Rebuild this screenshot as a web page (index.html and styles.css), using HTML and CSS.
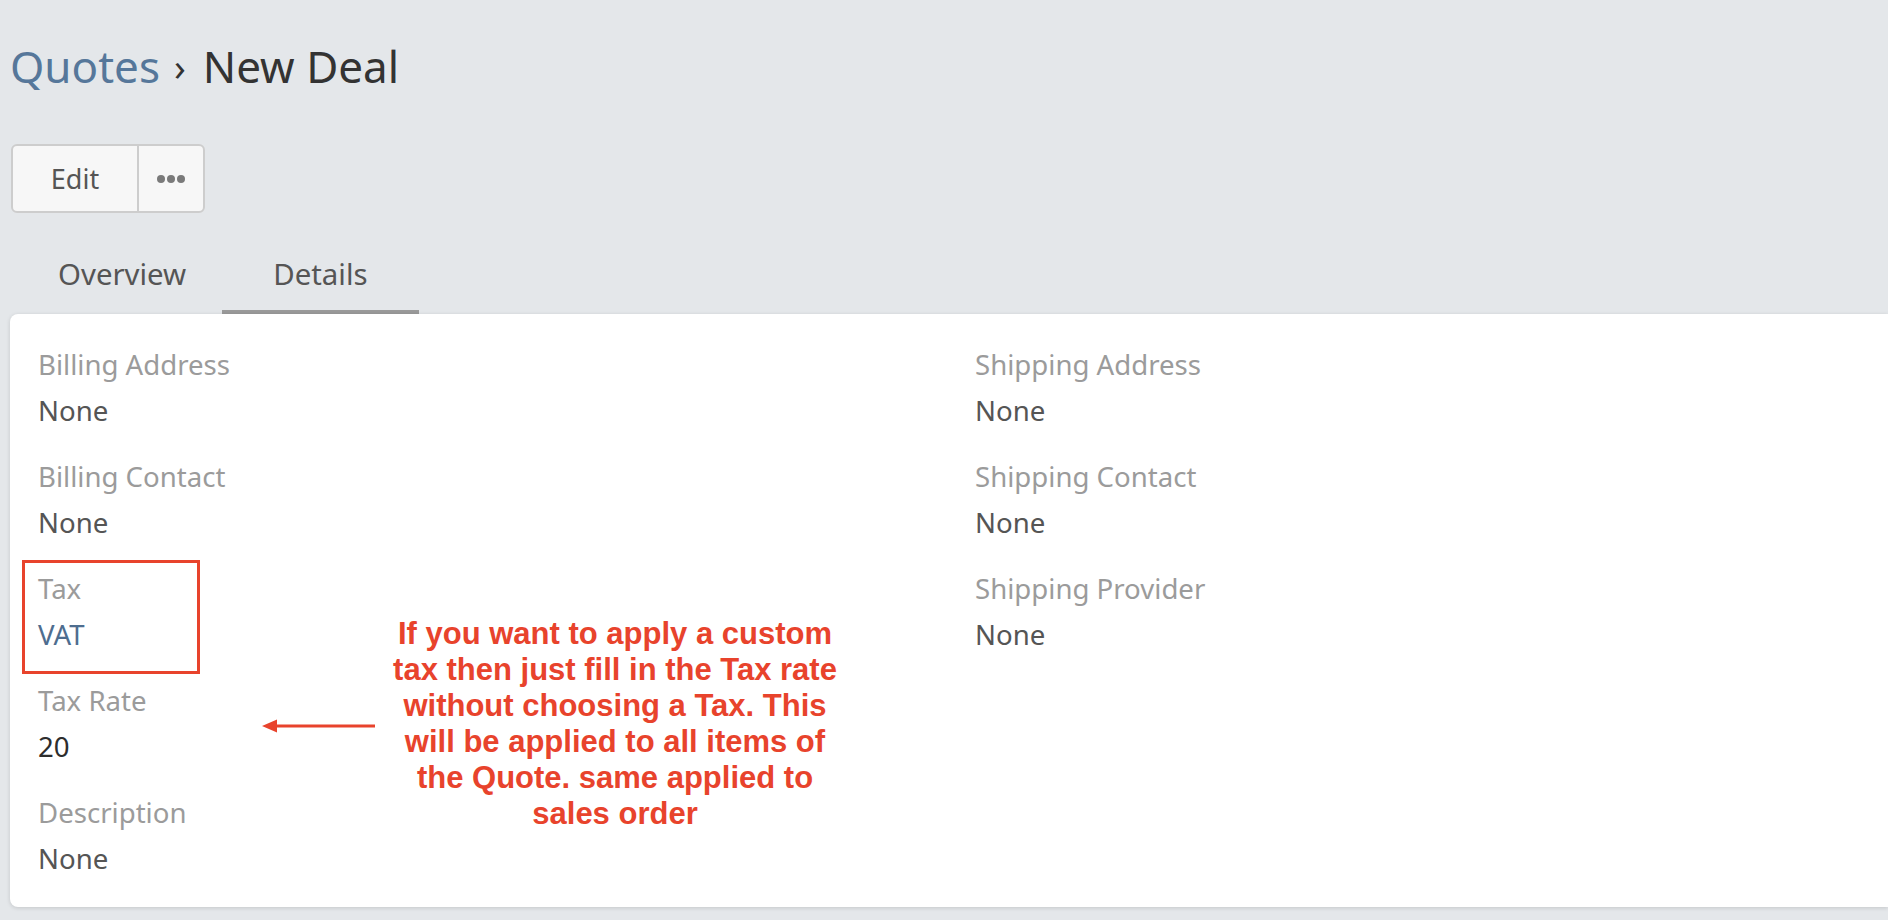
FILE: index.html
```html
<!DOCTYPE html>
<html lang="en">
<head>
<meta charset="utf-8">
<title>Quotes › New Deal</title>
<link rel="stylesheet" href="styles.css">
</head>
<body>
<header class="page-header">
  <h1 class="title"><a class="crumb" href="#">Quotes</a><span class="sep">›</span><span class="current">New Deal</span></h1>
  <div class="btn-group">
    <button class="btn btn-edit">Edit</button>
    <button class="btn btn-more" aria-label="More"><span class="dot"></span><span class="dot"></span><span class="dot"></span></button>
  </div>
  <nav class="tabs">
    <a class="tab tab-first" href="#">Overview</a>
    <a class="tab active" href="#">Details</a>
  </nav>
</header>
<main class="card">
  <div class="grid">
    <div class="col">
      <div class="field"><div class="label">Billing Address</div><div class="value">None</div></div>
      <div class="field"><div class="label">Billing Contact</div><div class="value">None</div></div>
      <div class="field"><div class="label">Tax</div><div class="value link">VAT</div></div>
      <div class="field"><div class="label">Tax Rate</div><div class="value dark">20</div></div>
      <div class="field"><div class="label">Description</div><div class="value">None</div></div>
    </div>
    <div class="col">
      <div class="field"><div class="label">Shipping Address</div><div class="value">None</div></div>
      <div class="field"><div class="label">Shipping Contact</div><div class="value">None</div></div>
      <div class="field"><div class="label">Shipping Provider</div><div class="value">None</div></div>
    </div>
  </div>
  <div class="highlight-box"></div>
  <svg class="arrow" width="114" height="16" viewBox="0 0 114 16" aria-hidden="true">
    <line x1="12" y1="8" x2="113" y2="8" stroke="#e8432c" stroke-width="3"/>
    <polygon points="0,8 15,1.5 15,14.5" fill="#e8432c"/>
  </svg>
  <div class="note">If you want to apply a custom<br>tax then just fill in the Tax rate<br>without choosing a Tax. This<br>will be applied to all items of<br>the Quote. same applied to<br>sales order</div>
</main>
</body>
</html>
```

FILE: styles.css
```css
html, body {
  margin: 0;
  padding: 0;
}
body {
  background: #e4e7ea;
  font-family: "Noto Sans", "Open Sans", sans-serif;
  padding-left: 10px;
  height: 920px;
  overflow: hidden;
  box-sizing: border-box;
}
.page-header {
  display: flex;
  flex-direction: column;
  align-items: flex-start;
}
.title {
  margin: 0;
  padding-top: 36px;
  height: 60px;
  line-height: 60px;
  font-size: 44px;
  font-weight: 400;
  color: #333;
  display: flex;
  align-items: center;
}
.crumb {
  color: #56779a;
  text-decoration: none;
}
.sep {
  font-size: 38px;
  color: #333;
  margin: 0 17px 0 14px;
}
.current {
  color: #333;
}
.btn-group {
  margin-top: 48px;
  margin-left: 1px;
  display: flex;
  height: 69px;
  border: 2px solid #cdcdcd;
  border-radius: 6px;
  background: #f7f7f7;
  box-sizing: border-box;
  overflow: hidden;
}
.btn {
  font-family: inherit;
  background: transparent;
  border: 0;
  padding: 0;
  margin: 0;
  display: flex;
  align-items: center;
  justify-content: center;
}
.btn-edit {
  width: 126px;
  font-size: 27px;
  color: #555;
  border-right: 2px solid #cdcdcd;
}
.btn-more {
  width: 64px;
  gap: 2px;
}
.dot {
  width: 8px;
  height: 8px;
  border-radius: 50%;
  background: #7a7a7a;
}
.tabs {
  margin-top: 41px;
  display: flex;
}
.tab {
  display: block;
  font-size: 29.4px;
  line-height: 40px;
  padding: 0 51px 16px;
  color: #555;
  text-decoration: none;
  border-bottom: 4px solid transparent;
}
.tab-first {
  padding-left: 48px;
  padding-right: 36px;
}
.tab.active {
  border-bottom-color: #9a9a9a;
}
.card {
  position: relative;
  background: #fff;
  border-radius: 8px 0 0 8px;
  box-shadow: 0 1px 4px rgba(0, 0, 0, 0.14);
  padding: 30px 0 29px 28px;
}
.grid {
  display: grid;
  grid-template-columns: 937px 1fr;
}
.col {
  display: flex;
  flex-direction: column;
  gap: 26px;
}
.label {
  font-size: 27.6px;
  line-height: 40px;
  color: #9b9b9b;
  margin-bottom: 6px;
}
.value {
  font-size: 27.6px;
  line-height: 40px;
  color: #555;
}
.value.link {
  color: #4e6d8f;
}
.value.dark {
  color: #2d2d2d;
}
.highlight-box {
  position: absolute;
  left: 12px;
  top: 246px;
  width: 178px;
  height: 114px;
  border: 3px solid #e8432c;
  box-sizing: border-box;
}
.arrow {
  position: absolute;
  left: 252px;
  top: 404px;
}
.note {
  position: absolute;
  left: 345px;
  top: 302px;
  width: 520px;
  text-align: center;
  font-family: "Liberation Sans", Arial, sans-serif;
  font-weight: 700;
  font-size: 31px;
  line-height: 36px;
  color: #e8432c;
}
```
